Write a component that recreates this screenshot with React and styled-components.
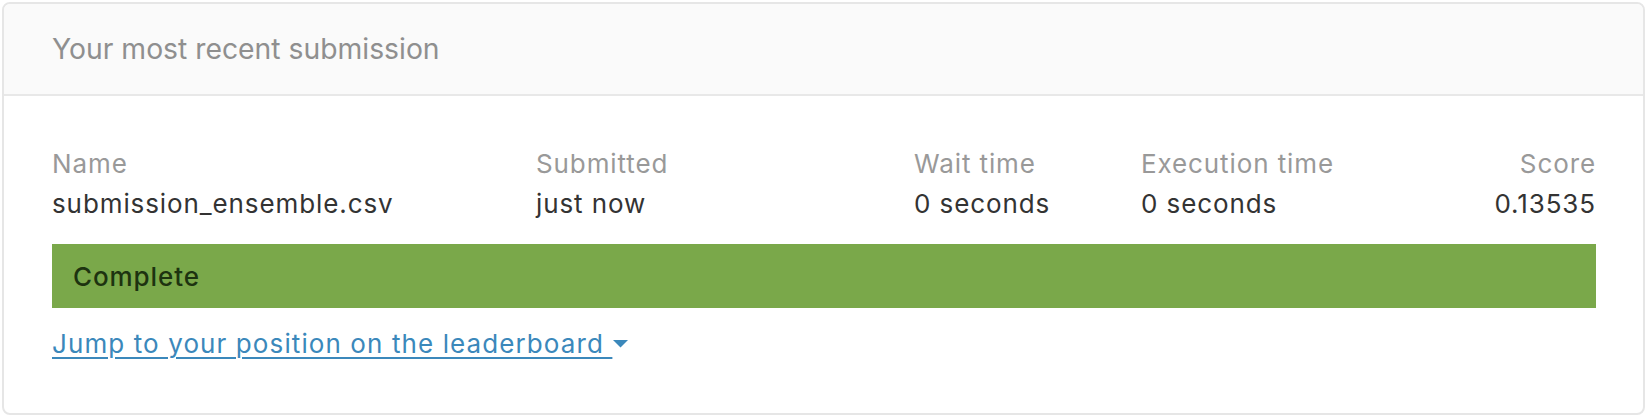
import React from "react";
import styled, { createGlobalStyle } from "styled-components";

const Global = createGlobalStyle`
  html, body { margin: 0; padding: 0; background: #ffffff; }
  body { font-family: Inter, "Noto Sans", "Liberation Sans", sans-serif; }
`;

const Card = styled.section`
  margin: 2px 3px 4px 2px;
  border: 2px solid #e6e6e6;
  border-radius: 8px;
  overflow: hidden;
  background: #ffffff;
`;

const Header = styled.header`
  background: #fafafa;
  border-bottom: 2px solid #e8e8e8;
  height: 90px;
  padding: 0 48px;
  display: flex;
  align-items: center;
  font-size: 28.3px;
  color: #8f8f8f;
`;

const Body = styled.div`
  padding: 48px 47px 49px 48px;
  display: flex;
  flex-direction: column;
  font-size: 26px;
  letter-spacing: 0.9px;
`;

const Grid = styled.div`
  display: grid;
  grid-template-columns: 484px 378px 227px 1fr auto;
  line-height: 40px;
`;

const Cell = styled.div`
  color: ${(p) => (p.$label ? "#999999" : "#333333")};
  text-align: ${(p) => (p.$right ? "right" : "left")};
  white-space: nowrap;
`;

const Status = styled.div`
  margin-top: 20px;
  height: 64px;
  background: #7aa84a;
  display: flex;
  align-items: center;
  padding-left: 21px;
  font-weight: 500;
  color: #1d3310;
`;

const JumpLink = styled.a`
  margin-top: 16px;
  align-self: flex-start;
  line-height: 40px;
  letter-spacing: 1.1px;
  color: #3b88bb;
  text-decoration: underline;
  text-underline-offset: 4px;
  text-decoration-thickness: 2px;
  cursor: pointer;
  display: inline-flex;
  align-items: center;
`;

const Caret = styled.svg`
  width: 15px;
  height: 8px;
  margin-left: 1px;
`;

const columns = [
  { label: "Name", value: "submission_ensemble.csv" },
  { label: "Submitted", value: "just now" },
  { label: "Wait time", value: "0 seconds" },
  { label: "Execution time", value: "0 seconds" },
  { label: "Score", value: "0.13535", right: true },
];

export default function App() {
  return (
    <>
      <Global />
      <Card>
        <Header>Your most recent submission</Header>
        <Body>
          <Grid>
            {columns.map((c) => (
              <Cell key={c.label} $label $right={c.right}>
                {c.label}
              </Cell>
            ))}
            {columns.map((c) => (
              <Cell key={c.label + "v"} $right={c.right}>
                {c.value}
              </Cell>
            ))}
          </Grid>
          <Status>Complete</Status>
          <JumpLink>
            Jump to your position on the leaderboard&nbsp;
            <Caret viewBox="0 0 15 8">
              <path d="M0 0 L15 0 L7.5 7.5 Z" fill="#3b88bb" />
            </Caret>
          </JumpLink>
        </Body>
      </Card>
    </>
  );
}
